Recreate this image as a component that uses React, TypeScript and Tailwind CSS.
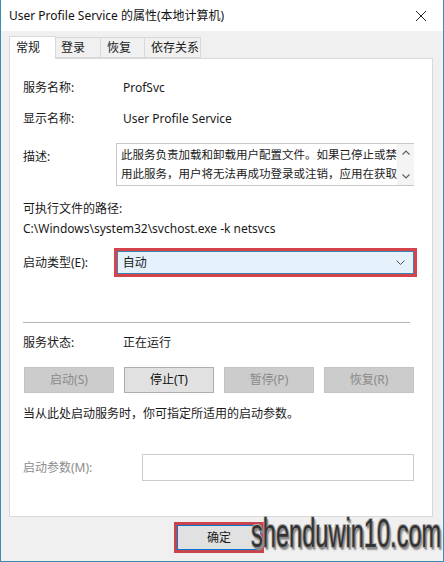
import React from "react";

const F = { fontFamily: '"Noto Sans", "Noto Sans CJK SC", sans-serif' };

function Btn({ label, disabled }: { label: string; disabled?: boolean }) {
  return (
    <div
      className={
        "w-[90px] h-[26px] flex items-center justify-center border text-[12px] " +
        (disabled
          ? "bg-[#cccccc] border-[#c4c4c4] text-[#8a8a8a]"
          : "bg-[#e1e1e1] border-[#adadad] text-[#111]")
      }
    >
      {label}
    </div>
  );
}

export default function App() {
  return (
    <div
      className="w-[444px] h-[562px] bg-[#f0f0f0] border-x border-b border-[#3a8fb0] flex flex-col relative overflow-hidden text-[12px] text-[#1a1a1a]"
      style={F}
    >
      {/* title bar */}
      <div className="h-[31px] bg-white flex items-center pl-[8px] pr-[16px] shrink-0">
        <div className="flex-1 text-[12px] text-[#111]">User Profile Service 的属性(本地计算机)</div>
        <svg width="12" height="12" viewBox="0 0 12 12" className="text-[#222]">
          <path d="M1 1 L11 11 M11 1 L1 11" stroke="currentColor" strokeWidth="1" />
        </svg>
      </div>
      {/* tabs */}
      <div className="mt-[5px] pl-[8px] flex items-end h-[22px] shrink-0">
        <div className="w-[47px] h-[23px] bg-white border border-b-0 border-[#d9d9d9] flex items-center pl-[6px] relative z-10 -mb-px">常规</div>
        <div className="w-[45px] h-[21px] border border-l-0 border-[#d9d9d9] flex items-center pl-[5px]">登录</div>
        <div className="w-[44px] h-[21px] border border-l-0 border-[#d9d9d9] flex items-center pl-[6px]">恢复</div>
        <div className="w-[56px] h-[21px] border border-l-0 border-[#d9d9d9] flex items-center pl-[6px]">依存关系</div>
      </div>
      {/* panel */}
      <div className="ml-[8px] mr-[10px] h-[459px] bg-white border border-[#d9d9d9] flex flex-col pl-[13px] pr-[18px] shrink-0">
        <div className="mt-[21px] flex h-[16px] items-center">
          <div className="w-[100px]">服务名称:</div>
          <div>ProfSvc</div>
        </div>
        <div className="mt-[15px] flex h-[16px] items-center">
          <div className="w-[100px]">显示名称:</div>
          <div>User Profile Service</div>
        </div>
        <div className="mt-[16px] flex items-start">
          <div className="w-[94px] mt-[5px]">描述:</div>
          <div className="w-[298px] h-[43px] border border-[#c8c8c8] border-r-0 flex">
            <div className="flex-1 pl-[4px] pt-[1px] leading-[19px] text-[11.5px] overflow-hidden whitespace-nowrap">
              <div>此服务负责加载和卸载用户配置文件。如果已停止或禁</div>
              <div>用此服务，用户将无法再成功登录或注销，应用在获取</div>
            </div>
            <div className="w-[17px] flex flex-col items-center justify-between py-[6px] bg-[#f4f4f4]">
              <svg width="8" height="5" viewBox="0 0 8 5"><path d="M0.5 4.5 L4 1 L7.5 4.5" fill="none" stroke="#606060" strokeWidth="1.2" /></svg>
              <svg width="8" height="5" viewBox="0 0 8 5"><path d="M0.5 0.5 L4 4 L7.5 0.5" fill="none" stroke="#606060" strokeWidth="1.2" /></svg>
            </div>
          </div>
        </div>
        <div className="mt-[15px] h-[16px] flex items-center">可执行文件的路径:</div>
        <div className="mt-[4px] h-[16px] flex items-center">C:\Windows\system32\svchost.exe -k netsvcs</div>
        <div className="mt-[14px] flex items-center">
          <div className="w-[94px] pt-[1px]">启动类型(E):</div>
          <div className="w-[298px] h-[23px] outline-3 outline-[#d5444a] border border-[#3b84b6] bg-[#e5f1fb] flex items-center pl-[5px] pr-[8px]">
            <div className="flex-1">自动</div>
            <svg width="9" height="6" viewBox="0 0 9 6"><path d="M0.5 0.5 L4.5 4.5 L8.5 0.5" fill="none" stroke="#555" strokeWidth="1" /></svg>
          </div>
        </div>
        <div className="mt-[48px] h-px bg-[#b5b5b5] mr-[4px]" />
        <div className="mt-[12px] flex h-[16px] items-center">
          <div className="w-[100px]">服务状态:</div>
          <div>正在运行</div>
        </div>
        <div className="mt-[16px] flex gap-[10px] pl-px">
          <Btn label="启动(S)" disabled />
          <Btn label="停止(T)" />
          <Btn label="暂停(P)" disabled />
          <Btn label="恢复(R)" disabled />
        </div>
        <div className="mt-[13px] h-[16px] flex items-center">当从此处启动服务时，你可指定所适用的启动参数。</div>
        <div className="mt-[32px] flex items-center">
          <div className="w-[119px] text-[#8c8c8c]">启动参数(M):</div>
          <div className="w-[273px] h-[27px] border border-[#cccccc] bg-white" />
        </div>
      </div>
      {/* bottom */}
      <div className="flex-1 flex items-start pl-[176px] pt-[8px]">
        <div className="w-[84px] h-[25px] bg-[#e1e1e1] border border-[#0078d7] outline-3 outline-[#c8434b] flex items-center justify-center">
          确定
        </div>
      </div>
      <div
        className="absolute left-[250px] top-[510px] text-[40px] leading-[46px] text-[#333] origin-left scale-x-[0.59] whitespace-nowrap"
        style={{
          fontFamily: '"Liberation Sans", sans-serif',
          textShadow:
            "2px 2px 0 #8a8a8a, -1px -1px 0 #b0b0b0, 1px -1px 0 #b0b0b0, -1px 1px 0 #b0b0b0, 3px 3px 2px #999",
        }}
      >
        shenduwin10.com
      </div>
    </div>
  );
}
